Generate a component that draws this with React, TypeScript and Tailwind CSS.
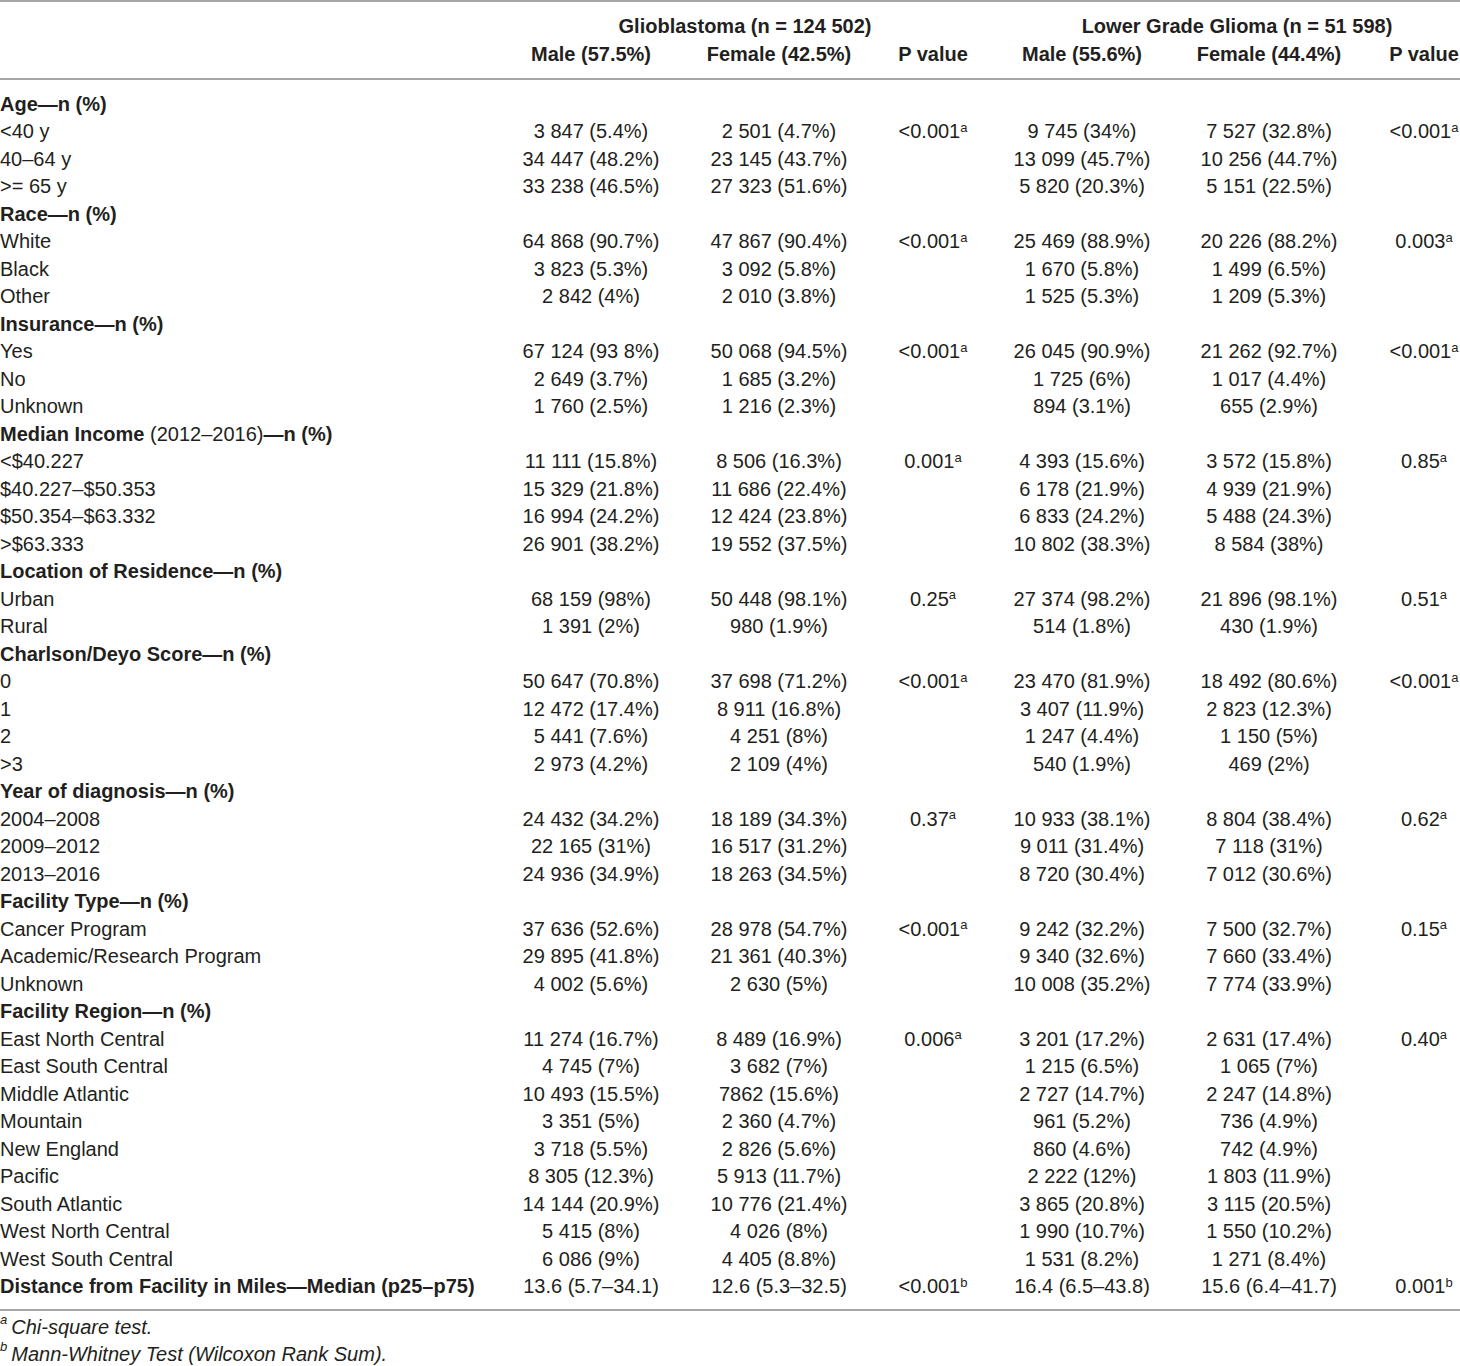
import React from "react";

type Row =
  | { kind: "head"; label: React.ReactNode }
  | {
      kind: "data";
      label: string;
      cells: [string, string, string, string, string, string];
      sup?: [string, string];
    };

const rows: Row[] = [
  { kind: "head", label: "Age\u2014n (%)" },
  { kind: "data", label: "<40 y", cells: ["3 847 (5.4%)", "2 501 (4.7%)", "<0.001", "9 745 (34%)", "7 527 (32.8%)", "<0.001"], sup: ["a", "a"] },
  { kind: "data", label: "40\u201364 y", cells: ["34 447 (48.2%)", "23 145 (43.7%)", "", "13 099 (45.7%)", "10 256 (44.7%)", ""] },
  { kind: "data", label: ">= 65 y", cells: ["33 238 (46.5%)", "27 323 (51.6%)", "", "5 820 (20.3%)", "5 151 (22.5%)", ""] },
  { kind: "head", label: "Race\u2014n (%)" },
  { kind: "data", label: "White", cells: ["64 868 (90.7%)", "47 867 (90.4%)", "<0.001", "25 469 (88.9%)", "20 226 (88.2%)", "0.003"], sup: ["a", "a"] },
  { kind: "data", label: "Black", cells: ["3 823 (5.3%)", "3 092 (5.8%)", "", "1 670 (5.8%)", "1 499 (6.5%)", ""] },
  { kind: "data", label: "Other", cells: ["2 842 (4%)", "2 010 (3.8%)", "", "1 525 (5.3%)", "1 209 (5.3%)", ""] },
  { kind: "head", label: "Insurance\u2014n (%)" },
  { kind: "data", label: "Yes", cells: ["67 124 (93 8%)", "50 068 (94.5%)", "<0.001", "26 045 (90.9%)", "21 262 (92.7%)", "<0.001"], sup: ["a", "a"] },
  { kind: "data", label: "No", cells: ["2 649 (3.7%)", "1 685 (3.2%)", "", "1 725 (6%)", "1 017 (4.4%)", ""] },
  { kind: "data", label: "Unknown", cells: ["1 760 (2.5%)", "1 216 (2.3%)", "", "894 (3.1%)", "655 (2.9%)", ""] },
  {
    kind: "head",
    label: (
      <span>
        Median Income <span className="font-normal">{"(2012\u20132016)"}</span>
        {"\u2014n (%)"}
      </span>
    ),
  },
  { kind: "data", label: "<$40.227", cells: ["11 111 (15.8%)", "8 506 (16.3%)", "0.001", "4 393 (15.6%)", "3 572 (15.8%)", "0.85"], sup: ["a", "a"] },
  { kind: "data", label: "$40.227\u2013$50.353", cells: ["15 329 (21.8%)", "11 686 (22.4%)", "", "6 178 (21.9%)", "4 939 (21.9%)", ""] },
  { kind: "data", label: "$50.354\u2013$63.332", cells: ["16 994 (24.2%)", "12 424 (23.8%)", "", "6 833 (24.2%)", "5 488 (24.3%)", ""] },
  { kind: "data", label: ">$63.333", cells: ["26 901 (38.2%)", "19 552 (37.5%)", "", "10 802 (38.3%)", "8 584 (38%)", ""] },
  { kind: "head", label: "Location of Residence\u2014n (%)" },
  { kind: "data", label: "Urban", cells: ["68 159 (98%)", "50 448 (98.1%)", "0.25", "27 374 (98.2%)", "21 896 (98.1%)", "0.51"], sup: ["a", "a"] },
  { kind: "data", label: "Rural", cells: ["1 391 (2%)", "980 (1.9%)", "", "514 (1.8%)", "430 (1.9%)", ""] },
  { kind: "head", label: "Charlson/Deyo Score\u2014n (%)" },
  { kind: "data", label: "0", cells: ["50 647 (70.8%)", "37 698 (71.2%)", "<0.001", "23 470 (81.9%)", "18 492 (80.6%)", "<0.001"], sup: ["a", "a"] },
  { kind: "data", label: "1", cells: ["12 472 (17.4%)", "8 911 (16.8%)", "", "3 407 (11.9%)", "2 823 (12.3%)", ""] },
  { kind: "data", label: "2", cells: ["5 441 (7.6%)", "4 251 (8%)", "", "1 247 (4.4%)", "1 150 (5%)", ""] },
  { kind: "data", label: ">3", cells: ["2 973 (4.2%)", "2 109 (4%)", "", "540 (1.9%)", "469 (2%)", ""] },
  { kind: "head", label: "Year of diagnosis\u2014n (%)" },
  { kind: "data", label: "2004\u20132008", cells: ["24 432 (34.2%)", "18 189 (34.3%)", "0.37", "10 933 (38.1%)", "8 804 (38.4%)", "0.62"], sup: ["a", "a"] },
  { kind: "data", label: "2009\u20132012", cells: ["22 165 (31%)", "16 517 (31.2%)", "", "9 011 (31.4%)", "7 118 (31%)", ""] },
  { kind: "data", label: "2013\u20132016", cells: ["24 936 (34.9%)", "18 263 (34.5%)", "", "8 720 (30.4%)", "7 012 (30.6%)", ""] },
  { kind: "head", label: "Facility Type\u2014n (%)" },
  { kind: "data", label: "Cancer Program", cells: ["37 636 (52.6%)", "28 978 (54.7%)", "<0.001", "9 242 (32.2%)", "7 500 (32.7%)", "0.15"], sup: ["a", "a"] },
  { kind: "data", label: "Academic/Research Program", cells: ["29 895 (41.8%)", "21 361 (40.3%)", "", "9 340 (32.6%)", "7 660 (33.4%)", ""] },
  { kind: "data", label: "Unknown", cells: ["4 002 (5.6%)", "2 630 (5%)", "", "10 008 (35.2%)", "7 774 (33.9%)", ""] },
  { kind: "head", label: "Facility Region\u2014n (%)" },
  { kind: "data", label: "East North Central", cells: ["11 274 (16.7%)", "8 489 (16.9%)", "0.006", "3 201 (17.2%)", "2 631 (17.4%)", "0.40"], sup: ["a", "a"] },
  { kind: "data", label: "East South Central", cells: ["4 745 (7%)", "3 682 (7%)", "", "1 215 (6.5%)", "1 065 (7%)", ""] },
  { kind: "data", label: "Middle Atlantic", cells: ["10 493 (15.5%)", "7862 (15.6%)", "", "2 727 (14.7%)", "2 247 (14.8%)", ""] },
  { kind: "data", label: "Mountain", cells: ["3 351 (5%)", "2 360 (4.7%)", "", "961 (5.2%)", "736 (4.9%)", ""] },
  { kind: "data", label: "New England", cells: ["3 718 (5.5%)", "2 826 (5.6%)", "", "860 (4.6%)", "742 (4.9%)", ""] },
  { kind: "data", label: "Pacific", cells: ["8 305 (12.3%)", "5 913 (11.7%)", "", "2 222 (12%)", "1 803 (11.9%)", ""] },
  { kind: "data", label: "South Atlantic", cells: ["14 144 (20.9%)", "10 776 (21.4%)", "", "3 865 (20.8%)", "3 115 (20.5%)", ""] },
  { kind: "data", label: "West North Central", cells: ["5 415 (8%)", "4 026 (8%)", "", "1 990 (10.7%)", "1 550 (10.2%)", ""] },
  { kind: "data", label: "West South Central", cells: ["6 086 (9%)", "4 405 (8.8%)", "", "1 531 (8.2%)", "1 271 (8.4%)", ""] },
];

const cols = "grid grid-cols-[500px_182px_194px_114px_184px_190px_96px]";
const cellPad = ["", "", "", "", "", "", "pl-[24px]"];

function DataRow({ row }: { row: Extract<Row, { kind: "data" }> }) {
  return (
    <div className={`${cols} h-[27.5px] items-center`}>
      <div className="whitespace-nowrap">{row.label}</div>
      {row.cells.map((cell, index) => {
        const isP = index === 2 || index === 5;
        const sup = isP && cell && row.sup ? row.sup[index === 2 ? 0 : 1] : "";
        return (
          <div key={index} className={`whitespace-nowrap text-center ${cellPad[index + 1]}`}>
            {cell}
            {sup && <sup className="text-[13px]">{sup}</sup>}
          </div>
        );
      })}
    </div>
  );
}

export default function App() {
  return (
    <div
      className="w-[1460px] bg-white text-[20px] leading-none text-[#231f20]"
      style={{ fontFamily: '"Liberation Sans", Arial, sans-serif' }}
    >
      <div className="border-t-2 border-b-2 border-[#a6a6a6] py-[10px] font-bold">
        <div className={`${cols} h-[28px] items-center`}>
          <div />
          <div className="col-span-3 text-center">Glioblastoma (n = 124 502)</div>
          <div className="col-span-3 pl-[24px] text-center">Lower Grade Glioma (n = 51 598)</div>
        </div>
        <div className={`${cols} h-[28px] items-center`}>
          <div />
          <div className="text-center">Male (57.5%)</div>
          <div className="text-center">Female (42.5%)</div>
          <div className="text-center">P value</div>
          <div className="text-center">Male (55.6%)</div>
          <div className="text-center">Female (44.4%)</div>
          <div className="pl-[24px] text-center">P value</div>
        </div>
      </div>

      <div className="border-b-2 border-[#a6a6a6] pt-[10px] pb-[9px]">
        {rows.map((row, index) =>
          row.kind === "head" ? (
            <div key={index} className="flex h-[27.5px] items-center font-bold whitespace-nowrap">
              {row.label}
            </div>
          ) : (
            <DataRow key={index} row={row} />
          ),
        )}
        <div className={`${cols} h-[27.5px] items-center`}>
          <div className="whitespace-nowrap font-bold">
            Distance from Facility in Miles{"\u2014"}Median (p25{"\u2013"}p75)
          </div>
          <div className="text-center">13.6 (5.7{"\u2013"}34.1)</div>
          <div className="text-center">12.6 (5.3{"\u2013"}32.5)</div>
          <div className="text-center">
            {"<0.001"}
            <sup className="text-[13px]">b</sup>
          </div>
          <div className="text-center">16.4 (6.5{"\u2013"}43.8)</div>
          <div className="text-center">15.6 (6.4{"\u2013"}41.7)</div>
          <div className="pl-[24px] text-center">
            0.001<sup className="text-[13px]">b</sup>
          </div>
        </div>
      </div>

      <div className="pt-[2px] italic">
        <div className="flex h-[27px] items-center">
          <sup className="mr-[4px] text-[13px]">a</sup>Chi-square test.
        </div>
        <div className="flex h-[27px] items-center">
          <sup className="mr-[4px] text-[13px]">b</sup>Mann-Whitney Test (Wilcoxon Rank Sum).
        </div>
      </div>
    </div>
  );
}
